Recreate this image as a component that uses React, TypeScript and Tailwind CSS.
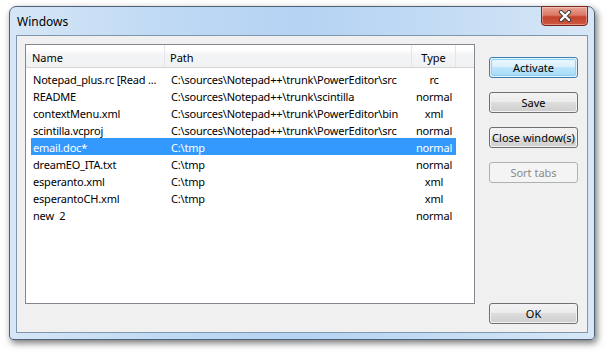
import React from "react";

const rows = [
  { name: "Notepad_plus.rc [Read ...", path: "C:\\sources\\Notepad++\\trunk\\PowerEditor\\src", type: "rc" },
  { name: "README", path: "C:\\sources\\Notepad++\\trunk\\scintilla", type: "normal" },
  { name: "contextMenu.xml", path: "C:\\sources\\Notepad++\\trunk\\PowerEditor\\bin", type: "xml" },
  { name: "scintilla.vcproj", path: "C:\\sources\\Notepad++\\trunk\\PowerEditor\\src", type: "normal" },
  { name: "email.doc*", path: "C:\\tmp", type: "normal", sel: true },
  { name: "dreamEO_ITA.txt", path: "C:\\tmp", type: "normal" },
  { name: "esperanto.xml", path: "C:\\tmp", type: "xml" },
  { name: "esperantoCH.xml", path: "C:\\tmp", type: "xml" },
  { name: "new  2", path: "", type: "normal" },
];

function Btn({ label, kind }: { label: string; kind?: "default" | "disabled" }) {
  if (kind === "disabled") {
    return (
      <div className="h-[21px] w-[89px] rounded-[3px] border border-[#adb2b5] bg-[#f4f4f4] flex items-center justify-center text-[#8a8a8a] whitespace-nowrap">
        {label}
      </div>
    );
  }
  if (kind === "default") {
    return (
      <div className="h-[21px] w-[89px] rounded-[3px] border border-[#3c7fb1] p-px bg-[#e5f1fb]">
        <div className="h-full w-full rounded-[2px] border border-[#8fd3f4] bg-[linear-gradient(#eaf6fd_0%,#d9f0fc_50%,#bee6fd_50%,#a7d9f5_100%)] flex items-center justify-center text-black whitespace-nowrap">
          {label}
        </div>
      </div>
    );
  }
  return (
    <div className="h-[21px] w-[89px] rounded-[3px] border border-[#707070] p-px bg-[#f2f2f2]">
      <div className="h-full w-full rounded-[2px] bg-[linear-gradient(#f2f2f2_0%,#ebebeb_50%,#dddddd_50%,#cfcfcf_100%)] flex items-center justify-center text-black whitespace-nowrap">
        {label}
      </div>
    </div>
  );
}

export default function App() {
  return (
    <div
      className="w-[607px] h-[352px] bg-white overflow-hidden pt-[6px] pl-[9px] text-[11px] leading-[15px]"
      style={{ fontFamily: '"Noto Sans", "Segoe UI", sans-serif' }}
    >
      <div className="relative w-[586px] h-[334px] rounded-t-[7px] rounded-b-[4px] border border-[#4f6277] bg-[linear-gradient(90deg,#d6e6f6_0%,#c0daf4_25%,#b4d3f3_50%,#c4dcf4_75%,#d8e7f6_100%)] shadow-[2px_3px_7px_rgba(0,0,0,0.55)] flex flex-col">
        <div className="h-[28px] pl-[7px] pt-[7px] text-black text-[12px] leading-[15px]">Windows</div>
        <div className="absolute top-[-1px] right-[6px] w-[47px] h-[20px] rounded-b-[4px] border border-[#7a2516] bg-[linear-gradient(#e8a596_0%,#dc7a66_45%,#c4402a_55%,#cf5a42_100%)] flex items-center justify-center shadow-[inset_0_0_0_1px_rgba(255,255,255,0.35)]">
          <svg width="14" height="12" viewBox="0 0 14 12">
            <path d="M3 2 L11 10 M11 2 L3 10" stroke="#3b3b3b" strokeWidth="4.2" strokeLinecap="round" />
            <path d="M3 2 L11 10 M11 2 L3 10" stroke="#ffffff" strokeWidth="2.4" strokeLinecap="round" />
          </svg>
        </div>
        <div className="mx-[6px] h-[298px] border border-[#7f96ad] bg-[#f0f0f0] flex pt-[8px] pl-[8px] pr-[9px]">
          <div className="w-[450px] h-[260px] border border-[#828790] bg-white flex flex-col">
            <div className="h-[23px] flex border-b border-[#d5d5d5] bg-[linear-gradient(#ffffff_0%,#ffffff_20%,#f3f4f6_45%,#f1f2f4_100%)] text-black">
              <div className="w-[139px] border-r border-[#e3e5e8] pl-[6px] pt-[5px]">Name</div>
              <div className="w-[247px] border-r border-[#e3e5e8] pl-[5px] pt-[5px]">Path</div>
              <div className="w-[44px] border-r border-[#e3e5e8] text-center pt-[5px]">Type</div>
              <div className="flex-1" />
            </div>
            <div className="pt-[2px] pl-[5px] flex flex-col tracking-[-0.2px]">
              {rows.map((r) => (
                <div
                  key={r.name}
                  className={
                    "h-[17px] w-[425px] flex items-center pt-px " +
                    (r.sel ? "bg-[#3399ff] text-white" : "text-black")
                  }
                >
                  <div className="w-[134px] pl-[2px] whitespace-pre overflow-hidden">{r.name}</div>
                  <div className="w-[247px] pl-[6px] whitespace-pre overflow-hidden">{r.path}</div>
                  <div className="w-[44px] text-center">{r.type}</div>
                </div>
              ))}
            </div>
          </div>
          <div className="ml-[14px] w-[89px] flex flex-col pt-[13px] pb-[8px] gap-[14px]">
            <Btn label="Activate" kind="default" />
            <Btn label="Save" />
            <Btn label="Close window(s)" />
            <Btn label="Sort tabs" kind="disabled" />
            <div className="mt-auto">
              <Btn label="OK" />
            </div>
          </div>
        </div>
      </div>
    </div>
  );
}
